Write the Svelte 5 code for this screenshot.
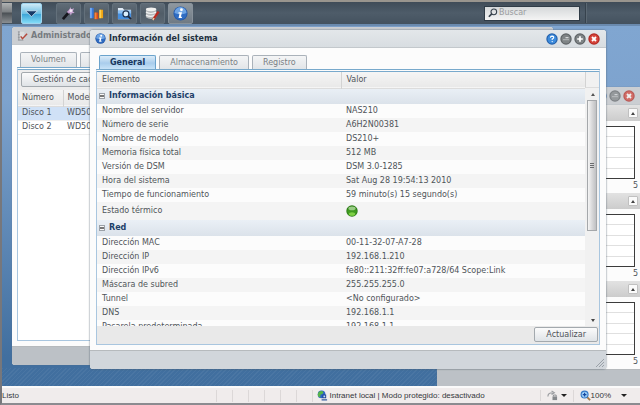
<script lang="ts">
  type TRow = { label: string; value: string; status?: boolean };
  type TGroup = { title: string; rows: TRow[] };

  const groups: TGroup[] = [
    {
      title: "Información básica",
      rows: [
        { label: "Nombre del servidor", value: "NAS210" },
        { label: "Número de serie", value: "A6H2N00381" },
        { label: "Nombre de modelo", value: "DS210+" },
        { label: "Memoria física total", value: "512 MB" },
        { label: "Versión de DSM", value: "DSM 3.0-1285" },
        { label: "Hora del sistema", value: "Sat Aug 28 19:54:13 2010" },
        { label: "Tiempo de funcionamiento", value: "59 minuto(s) 15 segundo(s)" },
        { label: "Estado térmico", value: "", status: true },
      ],
    },
    {
      title: "Red",
      rows: [
        { label: "Dirección MAC", value: "00-11-32-07-A7-28" },
        { label: "Dirección IP", value: "192.168.1.210" },
        { label: "Dirección IPv6", value: "fe80::211:32ff:fe07:a728/64 Scope:Link" },
        { label: "Máscara de subred", value: "255.255.255.0" },
        { label: "Tunnel", value: "<No configurado>" },
        { label: "DNS", value: "192.168.1.1" },
        { label: "Pasarela predeterminada", value: "192.168.1.1" },
      ],
    },
  ];

  const tabs = ["General", "Almacenamiento", "Registro"];
  const disks = [
    { name: "Disco 1", model: "WD5000AADS" },
    { name: "Disco 2", model: "WD5000AADS" },
  ];
  const monitors = ["CPU", "Memoria", "Red"];

  let activeTab = $state("General");
  let selectedDisk = $state("Disco 1");
</script>

{#snippet infoIcon()}
  <svg class="info-icon" viewBox="0 0 16 16" aria-hidden="true">
    <circle cx="8" cy="8" r="7.5" fill="#2458a8" />
    <circle cx="8" cy="8" r="6.6" fill="#2f6cc2" />
    <path d="M1.6 7.5a6.4 6.4 0 0 1 12.8 0q-6 2.5-12.8 0z" fill="#6ea4e4" />
    <circle cx="9" cy="4" r="1.5" fill="#fff" />
    <path d="M6 6.6h3.6L8.4 11.4h1.4L9.3 12.8H5.9L7 8H5.7z" fill="#fff" />
  </svg>
{/snippet}

{#snippet tool(kind: string, label: string)}
  <button class="tool" aria-label={label}>
    <svg viewBox="0 0 12 12">
      <circle cx="6" cy="6" r="5.7" class="rim {kind}" />
      <circle cx="6" cy="6" r="4.5" class="face {kind}" />
      {#if kind === "help"}
        <path d="M4.3 4.7q.2-1.6 1.8-1.6 1.7.1 1.6 1.5Q7.6 5.5 6.2 6v1" fill="none" stroke="#fff" stroke-width="1.1" />
        <circle cx="6.2" cy="8.6" r=".7" fill="#fff" />
      {:else if kind === "min"}
        <path d="M3 6.6h6" stroke="#a9adaf" stroke-width="1.2" />
        <path d="M5.500 4.600h3" stroke="#d3d6d8" stroke-width="1.2" />
      {:else if kind === "max"}
        <path d="M3.2 6h5.6M6 3.2v5.6" stroke="#fff" stroke-width="1.7" />
      {:else}
        <path d="M4 4l4 4M8 4l-4 4" stroke="#fff" stroke-width="1.8" />
      {/if}
    </svg>
  </button>
{/snippet}

<div class="page">
  <header class="taskbar">
    <div class="grip"></div>
    <button class="menu" aria-label="Menú principal">
      <svg viewBox="0 0 21 21"><path d="M4 7.5h13L10.500 14z" fill="#173a67" stroke="#e4f5ff" stroke-width=".8" /></svg>
    </button>
    <nav class="apps">
      <button class="app" aria-label="Asistente">
        <svg viewBox="0 0 16 16">
          <path d="M2 14l7-8" stroke="#15161c" stroke-width="3" />
          <path d="M7.500 7.500l3-3.500" stroke="#b894c4" stroke-width="3" />
          <path d="M10 1l1 2.500 3-1-1.500 3 2 2-3 .2-1 2.600-1.200-3-3-.8 2.500-1.800z" fill="#c8a5d2" />
          <circle cx="10.600" cy="5" r="1.500" fill="#f4e9f6" />
        </svg>
      </button>
      <button class="app" aria-label="Monitor de recursos">
        <svg viewBox="0 0 16 16">
          <path d="M1 2h4v11H1z" fill="#3879db" /><path d="M1 2h2v11H1z" fill="#75aaf0" />
          <path d="M6 7h4v7H6z" fill="#dd4a17" /><path d="M6 7h2v7H6z" fill="#f1863c" />
          <path d="M11 4h4v9h-4z" fill="#f0a313" /><path d="M11 4h2v9h-2z" fill="#ffd04f" />
        </svg>
      </button>
      <button class="app" aria-label="File Browser">
        <svg viewBox="0 0 16 16">
          <path d="M1 2h5l1.500 2H15v10H1z" fill="#e3edf8" />
          <path d="M1 5h14v9H1z" fill="#468fdf" /><path d="M1 5h14v3H1z" fill="#8cc0f3" />
          <circle cx="9.500" cy="8.500" r="3.200" fill="#d9efff" stroke="#1c3354" stroke-width="1.300" />
          <path d="M12 11l3 3" stroke="#1c2638" stroke-width="2" />
        </svg>
      </button>
      <button class="app" aria-label="Administrador de almacenamiento">
        <svg viewBox="0 0 16 16">
          <path d="M1 3v9q5 3.500 11 0V3z" fill="#b6b9bb" />
          <ellipse cx="6.500" cy="3.500" rx="5.500" ry="2" fill="#f2f2f0" />
          <path d="M1 6.500q5 3 11 0M1 9.500q5 3 11 0" fill="none" stroke="#f2f2f2" stroke-width="1.300" />
          <path d="M14.500 6L9 14" stroke="#b92d22" stroke-width="2.600" />
          <path d="M9.600 12.800L8.400 15" stroke="#f0cda3" stroke-width="1.500" />
        </svg>
      </button>
      <button class="app active" aria-label="Información del sistema">{@render infoIcon()}</button>
    </nav>
    <label class="search">
      <svg viewBox="0 0 12 12" aria-hidden="true">
        <circle cx="7" cy="4.600" r="3.400" fill="none" stroke="#37424d" stroke-width="1.300" />
        <path d="M4.500 7L1 10.500" stroke="#37424d" stroke-width="2" />
      </svg>
      <input type="text" placeholder="Buscar" aria-label="Buscar" />
    </label>
    <div class="divider"></div>
  </header>

  <main class="desktop">
    <section class="window storage">
      <div class="titlebar">
        <svg class="title-icon" viewBox="0 0 12 12" aria-hidden="true">
          <path d="M3 2h5v8H3z" fill="#dcdee0" />
          <path d="M1 2h2M1 5h2M1 8h2M1 11h6M2 2v9" stroke="#8f9498" />
          <path d="M11 4L6 9.500 4 7" fill="none" stroke="#b4493c" stroke-width="1.600" />
        </svg>
        <h2>Administrador de almacenamiento</h2>
      </div>
      <div class="body">
        <div class="tabs">
          <button class="tab">Volumen</button>
          <button class="tab">Disco duro</button>
        </div>
        <div class="panel">
          <div class="actions"><button class="btn">Gestión de caché</button></div>
          <table class="disks">
            <thead>
              <tr><th>Número</th><th>Modelo</th></tr>
            </thead>
            <tbody>
              {#each disks as disk}
                <tr class:selected={disk.name === selectedDisk} onclick={() => (selectedDisk = disk.name)}>
                  <td>{disk.name}</td>
                  <td>{disk.model}</td>
                </tr>
              {/each}
            </tbody>
          </table>
        </div>
      </div>
      <div class="foot"></div>
    </section>

    <section class="window monitor">
      <div class="titlebar">
        <div class="tools">
          {@render tool("help", "Ayuda")}
          {@render tool("min", "Minimizar")}
          {@render tool("close", "Cerrar")}
        </div>
      </div>
      <div class="body">
        {#each monitors as name}
          <div class="monitor-head"><button class="collapse" aria-label={`Contraer ${name}`}></button></div>
          <div class="chart"><i></i><i></i><i></i><i></i><i></i></div>
          <div class="axis">5</div>
        {/each}
      </div>
      <div class="foot"></div>
    </section>

    <section class="window info">
      <div class="titlebar">
        {@render infoIcon()}
        <h2>Información del sistema</h2>
        <div class="tools">
          {@render tool("help", "Ayuda")}
          {@render tool("min", "Minimizar")}
          {@render tool("max", "Maximizar")}
          {@render tool("close", "Cerrar")}
        </div>
      </div>
      <div class="body">
        <div class="tabs">
          {#each tabs as tab}
            <button class="tab" class:active={tab === activeTab} onclick={() => (activeTab = tab)}>{tab}</button>
          {/each}
        </div>
        <div class="panel">
          <div class="view">
            <table class="details">
              <thead>
                <tr><th>Elemento</th><th>Valor</th></tr>
              </thead>
              {#each groups as group}
                <tbody>
                  <tr class="group">
                    <th colspan="2"><button class="toggle" aria-label={`Contraer ${group.title}`}></button>{group.title}</th>
                  </tr>
                  {#each group.rows as row}
                    <tr class:tall={row.status}>
                      <td>{row.label}</td>
                      <td>
                        {#if row.status}
                          <svg class="led" viewBox="0 0 12 12" role="img" aria-label="Normal">
                            <circle cx="6" cy="6" r="5.700" fill="#2c7a17" />
                            <circle cx="6" cy="6.300" r="4.800" fill="#3f9a1f" />
                            <ellipse cx="6" cy="9" rx="3.200" ry="1.800" fill="#7fd045" />
                            <ellipse cx="6" cy="3.400" rx="3.600" ry="1.800" fill="#9acb86" />
                          </svg>
                        {:else}
                          {row.value}
                        {/if}
                      </td>
                    </tr>
                  {/each}
                </tbody>
              {/each}
            </table>
            <div class="scroll">
              <div class="corner"></div>
              <button class="arrow up" aria-label="Subir"></button>
              <div class="track"><div class="thumb"><i></i></div></div>
              <button class="arrow" aria-label="Bajar"></button>
            </div>
          </div>
          <div class="bottom"><button class="btn">Actualizar</button></div>
        </div>
      </div>
      <div class="foot">
        <svg viewBox="0 0 8 8" aria-hidden="true"><path d="M0 8l8-8M3 8l5-5M6 8l2-2" stroke="#9aa1a8" /></svg>
      </div>
    </section>
  </main>

  <footer class="status">
    <span class="ready">Listo</span>
    <div class="cells"><i></i><i></i><i></i><i></i><i></i><i></i><i></i></div>
    <div class="zone">
      <svg viewBox="0 0 12 12" aria-hidden="true">
        <circle cx="5" cy="4.800" r="4.200" fill="#2a62c9" />
        <path d="M2 2q3-2 5 0 0 3-3 3-1 2 0 3.500Q0 7 1 4z" fill="#57b548" />
        <path d="M6 5h4v4H6z" fill="#1e3e8d" /><path d="M7 6h2v2H7z" fill="#bfe0ff" />
        <path d="M5 10h6v1.500H5z" fill="#4468a8" />
      </svg>
      <span>Intranet local | Modo protegido: desactivado</span>
    </div>
    <button class="drop" aria-label="Privacidad">
      <svg viewBox="0 0 12 12">
        <path d="M1 7q0-4 5-4M5 1l3 2-3 2" fill="none" stroke="#9a9ca0" stroke-width="1.300" />
        <path d="M6 7h5v4H6z" fill="#85888c" /><path d="M7 7V5.500h3V7" fill="none" stroke="#85888c" />
      </svg>
      <b></b>
    </button>
    <button class="drop zoom">
      <svg viewBox="0 0 12 12">
        <path d="M7.500 7.500L11 11" stroke="#a87744" stroke-width="2" />
        <circle cx="5" cy="5" r="3.800" fill="#9fd0f7" stroke="#3577c6" stroke-width="1.200" />
        <path d="M3 5h4M5 3v4" stroke="#1646a0" stroke-width="1.300" />
      </svg>
      <span>100%</span>
      <b></b>
    </button>
  </footer>
</div>

<style>
  :global(body) {
    margin: 0;
  }
  .page {
    display: flex;
    flex-direction: column;
    height: 100vh;
    min-height: 400px;
    box-sizing: border-box;
    border-left: 2px solid #77777b;
    border-bottom: 2px solid #8b8b90;
    overflow: hidden;
    font: 8px/12px "DejaVu Sans", Verdana, sans-serif;
    color: #4f5459;
  }
  .page * {
    box-sizing: border-box;
  }
  button,
  input {
    font: inherit;
    color: inherit;
    margin: 0;
    padding: 0;
    border: 0;
    background: none;
  }
  svg {
    display: block;
    flex: none;
  }

  .taskbar {
    display: flex;
    align-items: center;
    height: 26px;
    flex: none;
    border-top: 2px solid #9a958e;
    border-bottom: 2px solid #6a8aae;
    background: linear-gradient(#404c58, #4e5c69 50%, #44525f);
  }
  .grip {
    width: 10px;
    height: 20px;
    background: linear-gradient(#b0b2b3, #7b7f82 45%, #4b5055 50%, #8b8f92);
  }
  .menu {
    width: 21px;
    height: 21px;
    margin-left: 9px;
    border: 1px solid #9fd4ee;
    border-radius: 2px;
    background: linear-gradient(#cdeaf7, #6fbfe3 50%, #3fa6d8 55%, #83dcf7);
  }
  .apps {
    display: flex;
    gap: 3px;
    margin-left: 14px;
  }
  .app {
    display: grid;
    place-items: center;
    width: 25px;
    height: 21px;
    border: 1px solid #63707b;
    border-radius: 2px;
    background: linear-gradient(#5f6b76, #515d68 50%, #5b6772);
  }
  .app.active {
    border-color: #87919a;
    background: linear-gradient(#8e979f, #6f7a84);
  }
  .app svg {
    width: 15px;
    height: 15px;
  }
  .search {
    display: flex;
    align-items: center;
    gap: 1px;
    width: 96px;
    height: 15px;
    margin-left: auto;
    padding-left: 3px;
    border: 1px solid #2f3b46;
    background: linear-gradient(#d5d8da, #f4f4f4);
  }
  .search svg {
    width: 10px;
    height: 10px;
  }
  .search input {
    flex: 1;
    min-width: 0;
    outline: 0;
  }
  .search input::placeholder {
    color: #9a9c9e;
    opacity: 1;
  }
  .divider {
    width: 2px;
    height: 20px;
    margin: 0 53px 0 5px;
    border-left: 1px solid #36424d;
    border-right: 1px solid #5b6873;
  }

  .desktop {
    position: relative;
    flex: 1;
    min-height: 0;
    overflow: hidden;
    background:
      repeating-linear-gradient(135deg, #ffffff0c 0 1px, transparent 1px 3px) bottom / 100% 18px no-repeat,
      linear-gradient(#80a6d1, #7ea3ce 20%, #416f9f 92%);
  }
  .window {
    position: absolute;
    display: flex;
    flex-direction: column;
    overflow: hidden;
    border-radius: 3px;
    background: #fcfcfc;
    box-shadow: 0 0 1px #5c6a78;
  }
  .storage {
    inset: 1px 87px 21px 10px;
  }
  .monitor {
    inset: 61px -1px 0 435px;
    border-radius: 3px 3px 0 0;
  }
  .info {
    inset: 4px 34px 17px 88px;
    box-shadow: 0 0 2px #4d5c6b;
  }
  .titlebar {
    display: flex;
    align-items: center;
    gap: 3px;
    height: 18px;
    flex: none;
    padding: 0 6px 0 5px;
    border-bottom: 1px solid #c3c8cc;
    background: linear-gradient(#e3e7ea, #d8dde1);
  }
  .titlebar .info-icon {
    width: 11px;
    height: 11px;
  }
  h2 {
    margin: 0;
    font-size: 8px;
    line-height: 12px;
    color: #22303f;
    white-space: nowrap;
  }
  .storage .titlebar,
  .monitor .titlebar {
    background: #cbced2;
  }
  .storage h2 {
    color: #767b80;
  }
  .title-icon {
    width: 11px;
    height: 11px;
  }
  .tools {
    display: flex;
    gap: 2px;
    margin-left: auto;
  }
  .tool svg {
    width: 12px;
    height: 12px;
  }
  .monitor .tools {
    opacity: 0.7;
  }
  .rim { fill: #5e6366; }
  .face { fill: #7f8486; }
  .rim.help { fill: #2460ab; }
  .face.help { fill: #3c8bdc; }
  .rim.close { fill: #b22822; }
  .face.close { fill: #d6453b; }
  .body {
    display: flex;
    flex-direction: column;
    flex: 1;
    min-height: 0;
    padding: 7px 6px 5px;
  }
  .foot {
    height: 19px;
    flex: none;
    border-top: 1px solid #b6babd;
    background: #d1d6db;
  }
  .storage .foot,
  .monitor .foot {
    background: #bcc1c6;
  }
  .monitor .foot {
    height: 17px;
  }
  .info .foot {
    display: flex;
    justify-content: flex-end;
    align-items: flex-end;
    padding: 2px;
  }
  .foot svg {
    width: 8px;
    height: 8px;
  }

  .tabs {
    display: flex;
    gap: 3px;
    padding-left: 3px;
  }
  .tab {
    height: 14px;
    padding: 0 10px;
    border: 1px solid #aab2ba;
    border-bottom: 0;
    border-radius: 2px 2px 0 0;
    background: linear-gradient(#f4f5f6, #e2e5e8);
    color: #7a7f84;
  }
  .tab.active {
    border-color: #6ba3cc;
    background: linear-gradient(#dcecf9, #a9cdec 55%, #c8e3f8);
    font-weight: bold;
    color: #17365c;
  }
  .panel {
    display: flex;
    flex-direction: column;
    flex: 1;
    min-height: 0;
    border: 1px solid #a9c6df;
    border-top: 3px double #78a9cc;
  }
  .btn {
    height: 15px;
    padding: 0 11px;
    border: 1px solid #a3a9ae;
    border-radius: 2px;
    background: linear-gradient(#fbfbfb, #dfe3e7);
  }

  table {
    border-collapse: collapse;
    table-layout: fixed;
  }
  th,
  td {
    padding: 0 4px;
    text-align: left;
    white-space: nowrap;
    font-weight: normal;
    line-height: 12px;
  }
  thead tr {
    height: 16px;
    background: linear-gradient(#f5f5f5, #e9e9e9);
    border-bottom: 1px solid #dcdcdc;
  }
  th + th {
    border-left: 1px solid #d3d3d3;
  }

  .storage .body {
    padding: 7px 5px 5px;
  }
  .storage .panel {
    background: #fff;
  }
  .storage .tab {
    height: 15px;
  }
  .actions {
    height: 20px;
    padding: 2px 3px;
    background: #ededed;
  }
  .disks {
    width: 100%;
  }
  .disks th:first-child {
    width: 45px;
  }
  .disks tbody tr {
    height: 14px;
    border-bottom: 1px solid #efefef;
  }
  .disks tr.selected {
    background: #d0e1f6;
  }

  .monitor .body {
    padding: 0;
  }
  .monitor-head {
    display: flex;
    justify-content: flex-end;
    align-items: center;
    height: 16px;
    padding-right: 3px;
    background: linear-gradient(#e2e2e2, #cccccc);
  }
  .collapse {
    display: grid;
    place-items: center;
    width: 10px;
    height: 10px;
    border: 1px solid #c0c0c0;
    border-radius: 1px;
    background: #fafafa;
  }
  .collapse::before,
  .up::before {
    content: "";
    border: 2px solid transparent;
    border-top: 0;
    border-bottom: 3px solid #444;
  }
  .chart {
    display: flex;
    flex-direction: column;
    height: 53px;
    margin: 5px 6px 0 8px;
    border: 1px solid #3c3c3c;
    background: #fff;
  }
  .chart i {
    flex: 1;
  }
  .chart i + i {
    border-top: 1px solid #e0e0e0;
  }
  .axis {
    height: 14px;
    padding: 1px 3px 0 0;
    text-align: right;
  }

  .view {
    display: flex;
    flex: 1;
    min-height: 0;
    overflow: hidden;
  }
  .details {
    flex: 1;
    min-width: 0;
    align-self: flex-start;
  }
  .details th,
  .details td {
    padding-left: 5px;
  }
  .details thead th:first-child {
    width: 50%;
  }
  .details tbody tr {
    height: 14px;
  }
  .details tbody tr:nth-child(odd) {
    background: #f4f4f4;
  }
  .details tbody tr.tall {
    height: 18px;
  }
  .details tbody tr.group {
    height: 16px;
    background: linear-gradient(#eaf0f6, #dbe2ea);
  }
  .details .group th {
    padding-left: 2px;
    font-weight: bold;
    color: #1d4069;
  }
  .toggle {
    width: 6px;
    height: 6px;
    margin-right: 4px;
    border: 1px solid #9ba1a8;
    background: linear-gradient(#f8f8f8 1px, #777 1px 3px, #f8f8f8 3px);
  }
  .led {
    width: 12px;
    height: 12px;
  }
  .scroll {
    display: flex;
    flex-direction: column;
    width: 14px;
    flex: none;
    padding-left: 2px;
    background: #f1f1f1;
  }
  .corner {
    height: 16px;
    margin-left: -2px;
    border-left: 1px solid #d3d3d3;
    border-bottom: 1px solid #dcdcdc;
  }
  .arrow {
    display: grid;
    place-items: center;
    height: 12px;
  }
  .arrow::before {
    content: "";
    border: 2px solid transparent;
    border-bottom: 0;
    border-top: 3px solid #444;
  }
  .arrow.up::before {
    border: 2px solid transparent;
    border-top: 0;
    border-bottom: 3px solid #555;
  }
  .track {
    flex: 1;
  }
  .thumb {
    display: grid;
    place-items: center;
    width: 10px;
    height: 61%;
    border: 1px solid #a5a8ab;
    background: linear-gradient(90deg, #f5f5f5, #d9d9da 50%, #bfc0c2);
  }
  .thumb i {
    width: 4px;
    height: 5px;
    background: repeating-linear-gradient(#6a6c6e 0 1px, transparent 1px 2px);
  }
  .bottom {
    display: flex;
    justify-content: flex-end;
    height: 18px;
    flex: none;
    padding: 1px;
    background: #e9e9e9;
  }

  .status {
    display: flex;
    align-items: center;
    height: 17px;
    flex: none;
    border-top: 2px solid #fafafa;
    background: #f0ecec;
    font: 8px/12px "Liberation Sans", Arial, sans-serif;
    color: #34373b;
  }
  .ready {
    flex: 1;
  }
  .cells {
    display: flex;
    gap: 15px;
    padding-right: 4px;
  }
  .cells i {
    width: 1px;
    height: 12px;
    background: #dcd8d8;
  }
  .zone {
    display: flex;
    align-items: center;
    gap: 2px;
    width: 223px;
  }
  .status svg {
    width: 11px;
    height: 11px;
  }
  .drop {
    display: flex;
    align-items: center;
    gap: 3px;
    padding: 0 6px;
    border-left: 1px solid #dcd8d8;
  }
  .drop b {
    border: 3px solid transparent;
    border-top-color: #222;
    border-bottom: 0;
  }
  .zoom {
    gap: 0;
    padding-right: 13px;
  }
  .zoom b {
    margin-left: 10px;
  }
</style>
